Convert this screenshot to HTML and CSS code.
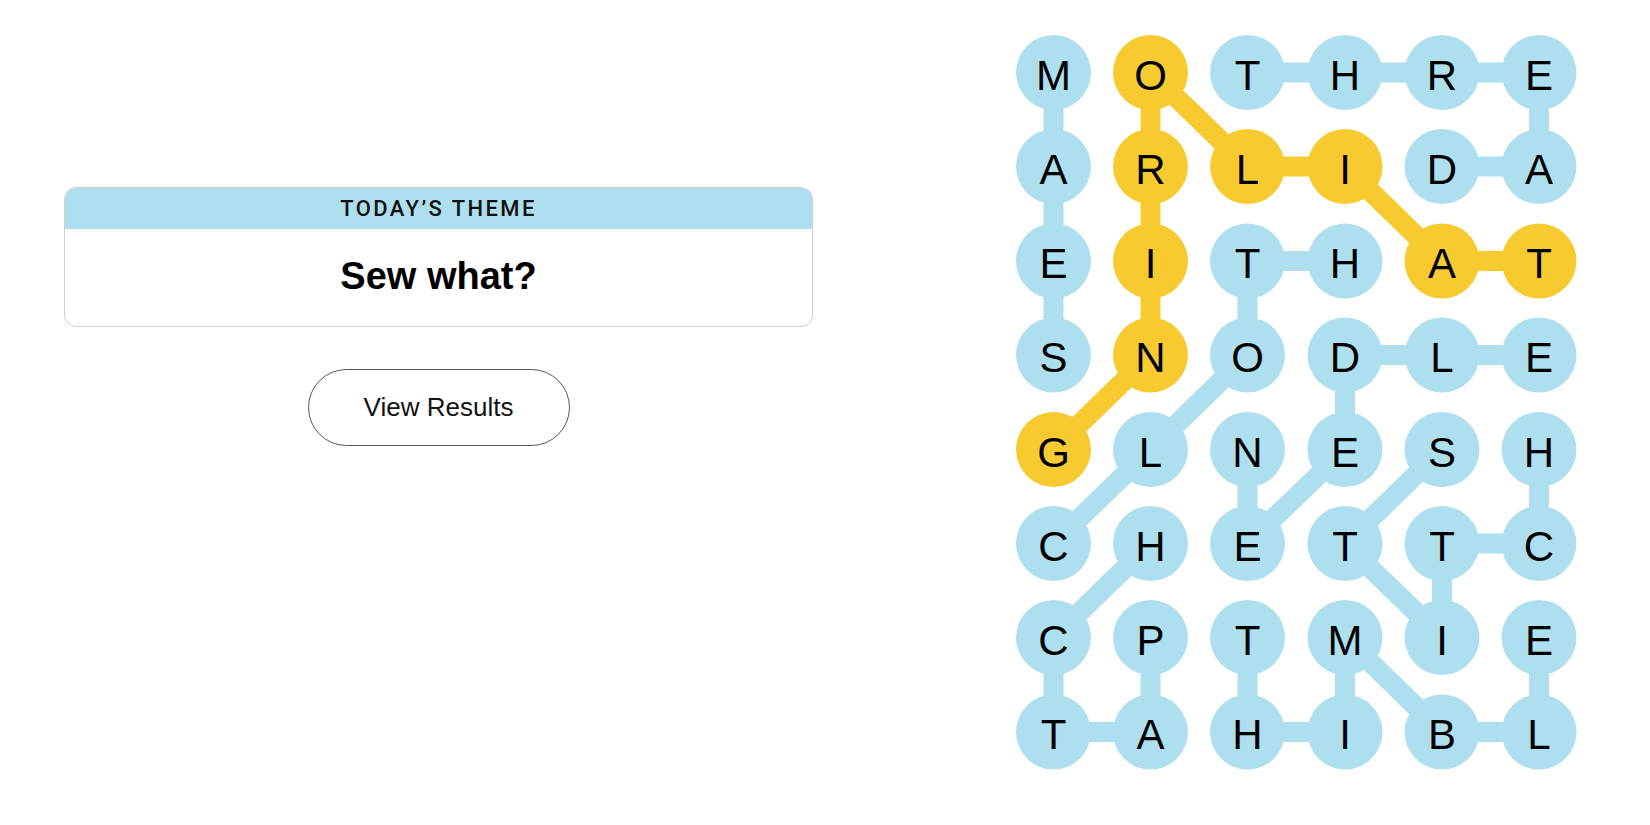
FILE: index.html
```html
<!DOCTYPE html>
<html lang="en">
<head>
<meta charset="utf-8">
<title>Strands</title>
<link rel="stylesheet" href="styles.css">
</head>
<body>
<main class="page">
  <section class="left">
    <div class="card">
      <div class="card-head">TODAY’S THEME</div>
      <div class="card-body">Sew what?</div>
    </div>
    <button class="results">View Results</button>
  </section>
  <section class="board">
    <svg class="board-svg" width="562" height="736" viewBox="0 0 562 736">
      <g class="lines blue">
        <polyline points="37.5,37.5 37.5,131.5 37.5,226 37.5,320"/>
        <polyline points="231.5,37.5 329,37.5 426,37.5 523,37.5 523,131.5 426,131.5"/>
        <polyline points="37.5,508.5 134.5,414.5 231.5,320 231.5,226 329,226"/>
        <polyline points="231.5,414.5 231.5,508.5 329,414.5 329,320 426,320 523,320"/>
        <polyline points="426,414.5 329,508.5 426,602.5 426,508.5 523,508.5 523,414.5"/>
        <polyline points="134.5,602.5 134.5,697 37.5,697 37.5,602.5 134.5,508.5"/>
        <polyline points="231.5,602.5 231.5,697 329,697 329,602.5 426,697 523,697 523,602.5"/>
      </g>
      <g class="lines gold">
        <polyline points="523,226 426,226 329,131.5 231.5,131.5 134.5,37.5 134.5,131.5 134.5,226 134.5,320 37.5,414.5"/>
      </g>
      <g class="dots">
        <circle class="b" cx="37.5" cy="37.5" r="37.5"/><circle class="y" cx="134.5" cy="37.5" r="37.5"/><circle class="b" cx="231.5" cy="37.5" r="37.5"/><circle class="b" cx="329" cy="37.5" r="37.5"/><circle class="b" cx="426" cy="37.5" r="37.5"/><circle class="b" cx="523" cy="37.5" r="37.5"/>
        <circle class="b" cx="37.5" cy="131.5" r="37.5"/><circle class="y" cx="134.5" cy="131.5" r="37.5"/><circle class="y" cx="231.5" cy="131.5" r="37.5"/><circle class="y" cx="329" cy="131.5" r="37.5"/><circle class="b" cx="426" cy="131.5" r="37.5"/><circle class="b" cx="523" cy="131.5" r="37.5"/>
        <circle class="b" cx="37.5" cy="226" r="37.5"/><circle class="y" cx="134.5" cy="226" r="37.5"/><circle class="b" cx="231.5" cy="226" r="37.5"/><circle class="b" cx="329" cy="226" r="37.5"/><circle class="y" cx="426" cy="226" r="37.5"/><circle class="y" cx="523" cy="226" r="37.5"/>
        <circle class="b" cx="37.5" cy="320" r="37.5"/><circle class="y" cx="134.5" cy="320" r="37.5"/><circle class="b" cx="231.5" cy="320" r="37.5"/><circle class="b" cx="329" cy="320" r="37.5"/><circle class="b" cx="426" cy="320" r="37.5"/><circle class="b" cx="523" cy="320" r="37.5"/>
        <circle class="y" cx="37.5" cy="414.5" r="37.5"/><circle class="b" cx="134.5" cy="414.5" r="37.5"/><circle class="b" cx="231.5" cy="414.5" r="37.5"/><circle class="b" cx="329" cy="414.5" r="37.5"/><circle class="b" cx="426" cy="414.5" r="37.5"/><circle class="b" cx="523" cy="414.5" r="37.5"/>
        <circle class="b" cx="37.5" cy="508.5" r="37.5"/><circle class="b" cx="134.5" cy="508.5" r="37.5"/><circle class="b" cx="231.5" cy="508.5" r="37.5"/><circle class="b" cx="329" cy="508.5" r="37.5"/><circle class="b" cx="426" cy="508.5" r="37.5"/><circle class="b" cx="523" cy="508.5" r="37.5"/>
        <circle class="b" cx="37.5" cy="602.5" r="37.5"/><circle class="b" cx="134.5" cy="602.5" r="37.5"/><circle class="b" cx="231.5" cy="602.5" r="37.5"/><circle class="b" cx="329" cy="602.5" r="37.5"/><circle class="b" cx="426" cy="602.5" r="37.5"/><circle class="b" cx="523" cy="602.5" r="37.5"/>
        <circle class="b" cx="37.5" cy="697" r="37.5"/><circle class="b" cx="134.5" cy="697" r="37.5"/><circle class="b" cx="231.5" cy="697" r="37.5"/><circle class="b" cx="329" cy="697" r="37.5"/><circle class="b" cx="426" cy="697" r="37.5"/><circle class="b" cx="523" cy="697" r="37.5"/>
      </g>
      <g class="letters">
        <text x="37.5" y="54.5">M</text><text x="134.5" y="54.5">O</text><text x="231.5" y="54.5">T</text><text x="329" y="54.5">H</text><text x="426" y="54.5">R</text><text x="523" y="54.5">E</text>
        <text x="37.5" y="148.5">A</text><text x="134.5" y="148.5">R</text><text x="231.5" y="148.5">L</text><text x="329" y="148.5">I</text><text x="426" y="148.5">D</text><text x="523" y="148.5">A</text>
        <text x="37.5" y="243">E</text><text x="134.5" y="243">I</text><text x="231.5" y="243">T</text><text x="329" y="243">H</text><text x="426" y="243">A</text><text x="523" y="243">T</text>
        <text x="37.5" y="337">S</text><text x="134.5" y="337">N</text><text x="231.5" y="337">O</text><text x="329" y="337">D</text><text x="426" y="337">L</text><text x="523" y="337">E</text>
        <text x="37.5" y="431.5">G</text><text x="134.5" y="431.5">L</text><text x="231.5" y="431.5">N</text><text x="329" y="431.5">E</text><text x="426" y="431.5">S</text><text x="523" y="431.5">H</text>
        <text x="37.5" y="525.5">C</text><text x="134.5" y="525.5">H</text><text x="231.5" y="525.5">E</text><text x="329" y="525.5">T</text><text x="426" y="525.5">T</text><text x="523" y="525.5">C</text>
        <text x="37.5" y="619.5">C</text><text x="134.5" y="619.5">P</text><text x="231.5" y="619.5">T</text><text x="329" y="619.5">M</text><text x="426" y="619.5">I</text><text x="523" y="619.5">E</text>
        <text x="37.5" y="714">T</text><text x="134.5" y="714">A</text><text x="231.5" y="714">H</text><text x="329" y="714">I</text><text x="426" y="714">B</text><text x="523" y="714">L</text>
      </g>
    </svg>
  </section>
</main>
</body>
</html>
```

FILE: styles.css
```css
html, body {
  margin: 0;
  padding: 0;
  background: #ffffff;
}

body {
  font-family: "Liberation Sans", Arial, sans-serif;
  color: #121212;
}

.page {
  display: flex;
  align-items: flex-start;
  padding: 35px 0 0 64px;
}

.left {
  width: 749px;
  margin-top: 152px;
  display: flex;
  flex-direction: column;
  align-items: center;
}

.card {
  width: 100%;
  box-sizing: border-box;
  border: 1px solid #cfcfcf;
  border-radius: 12px;
  overflow: hidden;
}

.card-head {
  height: 41px;
  background: #aedfee;
  display: flex;
  align-items: center;
  justify-content: center;
  font-family: Roboto, "Liberation Sans", sans-serif;
  font-weight: 500;
  font-size: 22px;
  letter-spacing: 2.4px;
  text-transform: uppercase;
  color: #121212;
}

.card-body {
  height: 97px;
  display: flex;
  align-items: center;
  justify-content: center;
  font-size: 38px;
  font-weight: 700;
  color: #000;
  padding-bottom: 2px;
  box-sizing: border-box;
}

.results {
  margin-top: 42px;
  width: 262px;
  height: 77px;
  border: 1px solid #555;
  border-radius: 40px;
  background: #fff;
  font-family: "Liberation Sans", Arial, sans-serif;
  font-size: 26px;
  color: #121212;
  padding: 0;
}

.board {
  margin-left: 203px;
}

.board-svg {
  display: block;
}

.lines polyline {
  fill: none;
  stroke-width: 20;
  stroke-linejoin: round;
  stroke-linecap: round;
}

.lines.blue polyline {
  stroke: #aedfee;
}

.lines.gold polyline {
  stroke: #f7cb2f;
}

.dots .b {
  fill: #aedfee;
}

.dots .y {
  fill: #f7cb2f;
}

.letters text {
  font-family: "Liberation Sans", Arial, sans-serif;
  font-size: 42px;
  fill: #000;
  text-anchor: middle;
}
```
